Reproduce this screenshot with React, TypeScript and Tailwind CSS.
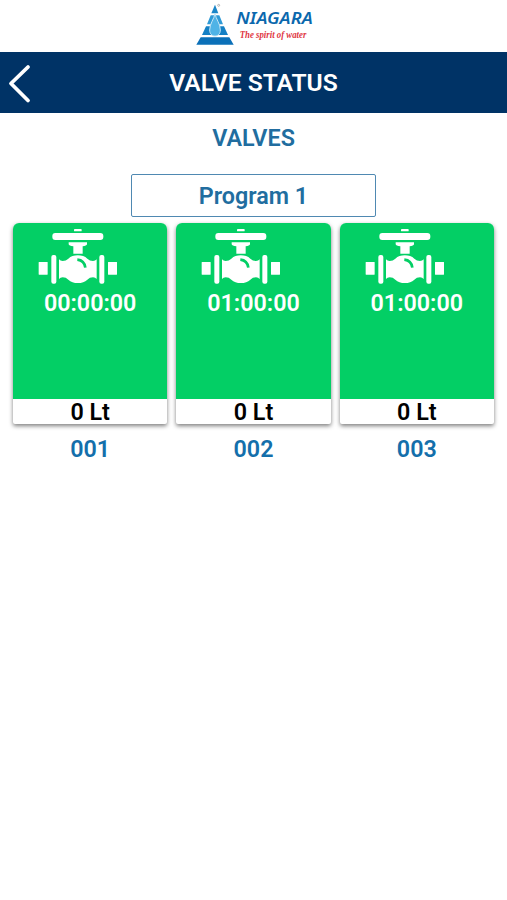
type Valve = {
    id: string;
    remaining: string;
    volume: number;
};

const valves: Valve[] = [
    { id: "001", remaining: "00:00:00", volume: 0 },
    { id: "002", remaining: "01:00:00", volume: 0 },
    { id: "003", remaining: "01:00:00", volume: 0 },
];

const Logo = () => (
    <svg viewBox="0 0 390 156" className="h-[52px] w-[130px]" role="img" aria-label="Niagara">
        <path d="M75 14L85 40H64Z" fill="#1b86c8" />
        <path d="M62 46H88L99 73H51Z" fill="#2f9ad6" />
        <path d="M48 79H102L114 105H36Z" fill="#1480c5" />
        <path d="M32 112H118L131 134H19Z" fill="#0b70b8" />
        <path
            d="M75 40C77 57 91 70 91 90C91 102 84 108 75 108C66 108 59 102 59 90C59 70 73 57 75 40Z"
            fill="#4fb3e6"
            stroke="#c5e5f6"
            strokeWidth="3"
        />
        <circle cx="86" cy="16" r="3" fill="none" stroke="#777" strokeWidth="1.5" />
        <text
            x="139"
            y="72"
            textLength="229"
            lengthAdjust="spacingAndGlyphs"
            fill="#0b68ad"
            className="font-['Noto_Sans',sans-serif] text-[48px] font-semibold italic"
        >
            NIAGARA
        </text>
        <text
            x="149"
            y="113"
            textLength="200"
            lengthAdjust="spacingAndGlyphs"
            fill="#e0353f"
            className="font-['Liberation_Serif',serif] text-[31px] font-semibold italic"
        >
            The spirit of water
        </text>
    </svg>
);

const ValveIcon = () => (
    <svg viewBox="0 0 285 195" className="mt-[2px] ml-[17px] h-[65px] w-[95px] shrink-0" fill="#fff">
        <rect x="132" y="12" width="23" height="7" rx="2" />
        <rect x="67" y="24" width="153" height="21" rx="9" />
        <path d="M116 52H171V58Q170 63 158 64V86H130V64Q117 63 116 58Z" />
        <rect x="26" y="111" width="27" height="38" rx="1" />
        <rect x="64" y="90" width="15" height="86" rx="6" />
        <path d="M87 103Q91 108 98 108Q108 108 115 101Q126 91 143.500 91Q161 91 172 101Q179 108 189 108Q196 108 200 103V162Q196 157 189 157Q179 157 172 164Q161 174 143.500 174Q126 174 115 164Q108 157 98 157Q91 157 87 162Z" />
        <rect x="208" y="90" width="15" height="86" rx="6" />
        <rect x="234" y="111" width="27" height="38" rx="1" />
        <path d="M142 104Q163 106 166 128" fill="none" stroke="#03cf65" strokeWidth="8" />
    </svg>
);

const ValveCard = ({ valve }: { valve: Valve }) => (
    <div className="text-center">
        <div className="flex h-[201px] flex-col rounded-t-[6px] rounded-b-[2px] bg-white shadow-[0_2px_4px_rgba(0,0,0,0.5)]">
            <div className="flex h-[176px] shrink-0 flex-col rounded-t-[6px] bg-[#03cf65]">
                <ValveIcon />
                <span className="leading-[26px] text-white">{valve.remaining}</span>
            </div>
            <span className="leading-[27px] text-black">{valve.volume} Lt</span>
        </div>
        <div className="mt-[11px] leading-[28px] text-[#146fab]">{valve.id}</div>
    </div>
);

export default function App() {
    return (
        <div className="min-h-screen bg-white font-[Roboto,sans-serif] text-[23.300px] font-semibold">
            <header>
                <div className="flex h-[52px] justify-center pl-[3px]">
                    <Logo />
                </div>
                <div className="grid h-[61px] grid-cols-[40px_1fr_40px] items-center bg-[#003366] text-white">
                    <button aria-label="Back">
                        <svg viewBox="0 0 40 60" className="h-[60px] w-[40px]" fill="none" stroke="#fff" strokeWidth="3.800">
                            <path d="M28 14L11 30.500L28 47.500" strokeLinecap="round" strokeLinejoin="round" />
                        </svg>
                    </button>
                    <h1 className="text-center text-[24.600px] leading-[30px]">VALVE STATUS</h1>
                </div>
            </header>
            <main>
                <h2 className="mt-[10px] text-center leading-[30px] text-[#216d9f]">VALVES</h2>
                <div className="mx-auto mt-[21px] h-[43px] w-[245px] rounded-[2px] border border-[#4f89b2] text-center leading-[43px] text-[#216d9f]">
                    Program 1
                </div>
                <div className="mt-[6px] grid grid-cols-3 gap-[9px] px-[13px]">
                    {valves.map((valve) => (
                        <ValveCard key={valve.id} valve={valve} />
                    ))}
                </div>
            </main>
        </div>
    );
}
